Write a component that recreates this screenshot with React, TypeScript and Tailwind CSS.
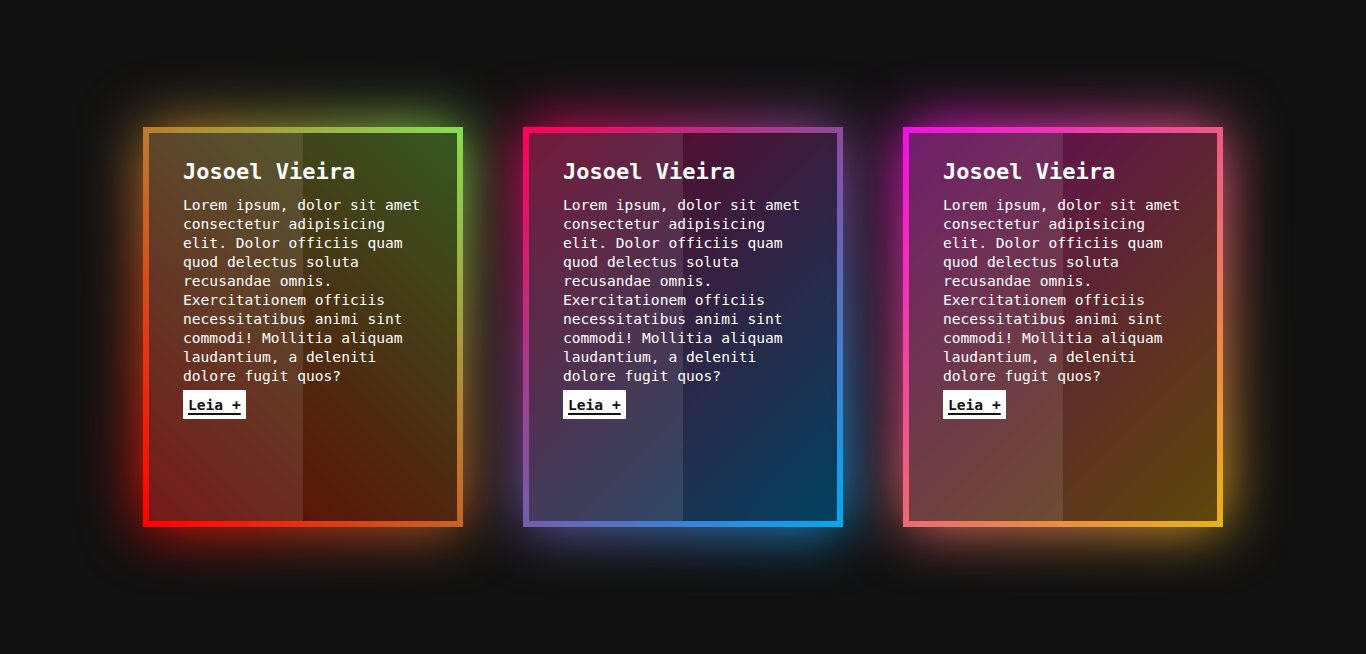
import React from 'react';

type Card = { grad: string; blur: string };

const cards: Card[] = [
  {
    grad: 'bg-[linear-gradient(45deg,#ff0000,#84e054)]',
    blur: 'bg-[linear-gradient(45deg,#ff0000,#84e054)]',
  },
  {
    grad: 'bg-[linear-gradient(135deg,#ff0058,#03a9f4)]',
    blur: 'bg-[linear-gradient(135deg,#ff0058,#03a9f4)]',
  },
  {
    grad: 'bg-[linear-gradient(135deg,#f010e4,#e8b414)]',
    blur: 'bg-[linear-gradient(135deg,#f010e4,#e8b414)]',
  },
];

const text =
  'Lorem ipsum, dolor sit amet consectetur adipisicing elit. Dolor officiis quam quod delectus soluta recusandae omnis. Exercitationem officiis necessitatibus animi sint commodi! Mollitia aliquam laudantium, a deleniti dolore fugit quos?';

function Box({ card }: { card: Card }) {
  return (
    <div className="relative w-[320px] h-[400px] shrink-0">
      {/* glow */}
      <div className={`absolute inset-0 blur-[30px] ${card.blur}`}></div>
      {/* gradient border */}
      <div className={`absolute inset-0 ${card.grad}`}></div>
      {/* inner panel */}
      <div className="absolute inset-[6px] bg-black/60 overflow-hidden">
        <div className="absolute left-0 top-0 w-1/2 h-full bg-white/10"></div>
      </div>

      <div className="relative z-10 px-[40px] pt-[31px] text-white font-['DejaVu_Sans_Mono',monospace]">
        <h2 className="text-[22px] leading-[28px] font-bold">Josoel Vieira</h2>
        <p className="mt-[9px] text-[14.6px] leading-[19px]">{text}</p>
        <a
          href="#"
          className="inline-block mt-[5px] bg-white text-[#111] px-[5px] py-[5px] text-[14.6px] leading-[19px] font-bold underline decoration-2 underline-offset-[3px]"
        >
          Leia +
        </a>
      </div>
    </div>
  );
}

export default function App() {
  return (
    <div className="min-h-screen h-[654px] bg-[#111111] flex items-center justify-center gap-[60px] overflow-hidden">
      {cards.map((c, i) => (
        <Box key={i} card={c} />
      ))}
    </div>
  );
}
